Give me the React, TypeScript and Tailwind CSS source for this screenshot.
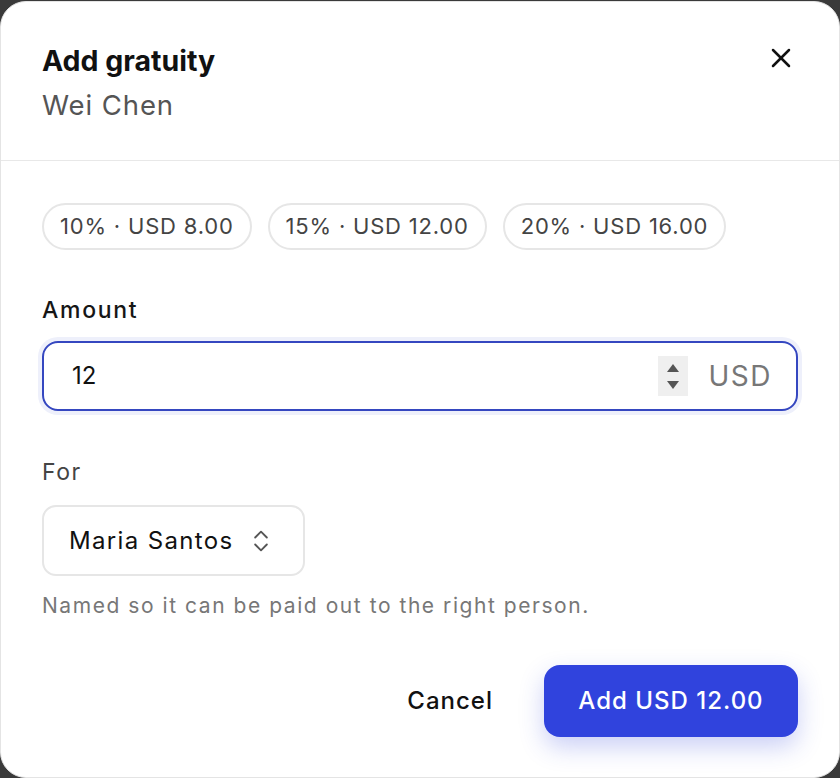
import { X, ChevronsUpDown } from "lucide-react";

const tips = [
  { pct: "10%", amount: "8.00" },
  { pct: "15%", amount: "12.00" },
  { pct: "20%", amount: "16.00" },
];

export default function App() {
  return (
    <div className="h-[778px] w-[840px] overflow-hidden bg-[#3a3a3a] pt-px" style={{ fontFamily: "Inter, 'Noto Sans', sans-serif" }}>
      <div className="flex h-[777px] flex-col rounded-[26px] border border-[#e4e4e4] bg-white">
        <div className="flex items-start justify-between border-b border-[#e8e8e8] pt-[40px] pr-[42px] pb-[36px] pl-[41px]">
          <div>
            <h2 className="text-[28.5px] leading-[38px] font-bold text-[#111]">Add gratuity</h2>
            <p className="mt-[6px] text-[27.5px] leading-[38px] tracking-[0.9px] text-[#555]">Wei Chen</p>
          </div>
          <button className="text-[#111]">
            <X size={32} strokeWidth={1.9} />
          </button>
        </div>

        <div className="flex flex-1 flex-col px-[41px] pt-[42px]">
          <div className="flex gap-4">
            {tips.map((t) => (
              <button
                key={t.pct}
                className="h-[47px] rounded-full border-2 border-[#e6e6e6] px-[16px] text-[22px] tracking-[0.8px] text-[#444]"
              >
                {t.pct} · USD {t.amount}
              </button>
            ))}
          </div>

          <label className="mt-[44px] text-[23px] leading-[32px] font-medium tracking-[1.7px] text-[#161616]">Amount</label>
          <div className="mt-[15px] flex h-[70px] items-center rounded-[16px] border-2 border-[#3547c0] pr-[24px] pl-[28px] ring-4 ring-[#eef0fb]">
            <span className="flex-1 text-[24px] text-[#111]">12</span>
            <div className="flex h-[40px] w-[30px] flex-col items-center justify-center gap-[9px] bg-[#efefef]">
              <span className="h-0 w-0 border-x-[6px] border-b-[8px] border-x-transparent border-b-[#555]" />
              <span className="h-0 w-0 border-x-[6px] border-t-[8px] border-x-transparent border-t-[#555]" />
            </div>
            <span className="ml-[20px] text-[28px] tracking-[1.5px] text-[#777]">USD</span>
          </div>

          <label className="mt-[45px] text-[23px] leading-[32px] tracking-[1.5px] text-[#444]">For</label>
          <button className="mt-[17px] flex h-[71px] w-[263px] items-center justify-between rounded-[14px] border-2 border-[#e6e6e6] pr-[28px] pl-[25px] text-[24px] tracking-[1.35px] text-[#111]">
            Maria Santos
            <ChevronsUpDown size={28} strokeWidth={1.6} className="text-[#555]" />
          </button>
          <p className="mt-[16px] text-[21px] leading-[28px] tracking-[1.55px] text-[#777]">Named so it can be paid out to the right person.</p>

          <div className="mt-[45px] flex items-center justify-end gap-[51px]">
            <button className="text-[24px] font-medium tracking-[1px] text-[#111]">Cancel</button>
            <button className="h-[72px] w-[254px] rounded-[16px] bg-[#3043dd] text-[24px] font-medium tracking-[1px] text-white shadow-[0_10px_24px_rgba(48,67,221,0.25)]">
              Add USD 12.00
            </button>
          </div>
        </div>
      </div>
    </div>
  );
}
